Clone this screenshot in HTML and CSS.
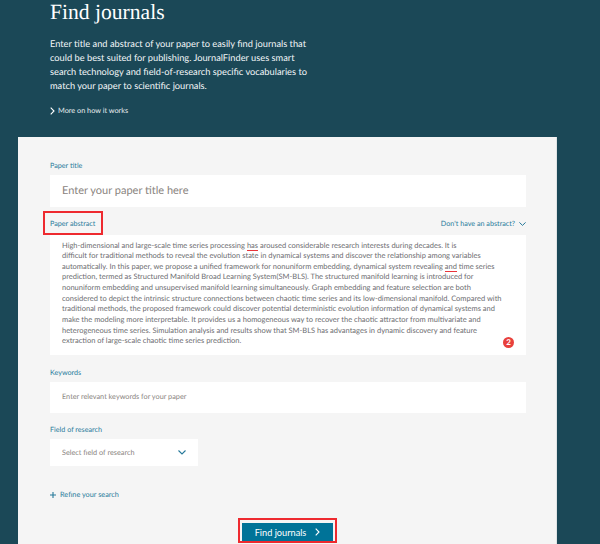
FILE: index.html
```html
<!DOCTYPE html>
<html lang="en">
<head>
<meta charset="utf-8">
<title>Find journals</title>
<link rel="stylesheet" href="styles.css">
</head>
<body>
<main class="page">
  <section class="intro">
    <h1 class="intro-title">Find journals</h1>
    <p class="intro-text">Enter title and abstract of your paper to easily find journals that<br>could be best suited for publishing. JournalFinder uses smart<br>search technology and field-of-research specific vocabularies to<br>match your paper to scientific journals.</p>
    <a class="more-link">
      <svg class="more-icon" width="5" height="8" viewBox="0 0 5 8"><path d="M.7.6 4 4 .7 7.400" fill="none" stroke="#fff" stroke-width="1.100"/></svg>
      More on how it works
    </a>
  </section>
  <form class="card">
    <label class="label label-title">Paper title</label>
    <div class="field field-title">Enter your paper title here</div>

    <div class="abstract-head">
      <label class="label abstract-label">Paper abstract</label>
      <a class="no-abstract">Don't have an abstract?
        <svg width="7" height="4" viewBox="0 0 7 4"><path d="M.4.4 3.500 3.400 6.600.4" fill="none" stroke="#26799a" stroke-width="1"/></svg>
      </a>
    </div>
    <div class="field field-abstract">
      <p class="abstract-text">High-dimensional and large-scale time series processing <span class="spell">has</span> aroused considerable research interests during decades. It is<br>difficult for traditional methods to reveal the evolution state in dynamical systems and discover the relationship among variables<br>automatically. In this paper, we propose a unified framework for nonuniform embedding, dynamical system revealing <span class="spell">and</span> time series<br>prediction, termed as Structured Manifold Broad Learning System(SM-BLS). The structured manifold learning is introduced for<br>nonuniform embedding and unsupervised manifold learning simultaneously. Graph embedding and feature selection are both<br>considered to depict the intrinsic structure connections between chaotic time series and its low-dimensional manifold. Compared with<br>traditional methods, the proposed framework could discover potential deterministic evolution information of dynamical systems and<br>make the modeling more interpretable. It provides us a homogeneous way to recover the chaotic attractor from multivariate and<br>heterogeneous time series. Simulation analysis and results show that SM-BLS has advantages in dynamic discovery and feature<br>extraction of large-scale chaotic time series prediction.</p>
      <span class="badge">2</span>
    </div>

    <label class="label label-keywords">Keywords</label>
    <div class="field field-keywords">Enter relevant keywords for your paper</div>

    <label class="label label-research">Field of research</label>
    <div class="field field-select">
      <span>Select field of research</span>
      <svg width="8" height="5" viewBox="0 0 8 5"><path d="M.5.5 4 4 7.500.5" fill="none" stroke="#26799a" stroke-width="1.100"/></svg>
    </div>

    <a class="refine">
      <svg width="6" height="6" viewBox="0 0 6 6"><path d="M3 0v6M0 3h6" stroke="#26799a" stroke-width="1.100"/></svg>
      Refine your search
    </a>

    <div class="actions">
      <div class="highlight">
        <button class="submit" type="button">Find journals
          <svg width="5" height="8" viewBox="0 0 5 8"><path d="M.7.6 4 4 .7 7.400" fill="none" stroke="#fff" stroke-width="1.100"/></svg>
        </button>
      </div>
    </div>
  </form>
</main>
</body>
</html>
```

FILE: styles.css
```css
* { box-sizing: border-box; }
html, body { margin: 0; height: 544px; overflow: hidden; }
body { background: #1b4857; font-family: Lato, "Open Sans", sans-serif; color: #fff; text-rendering: geometricPrecision; }
.page { display: flex; flex-direction: column; }
.intro { padding: 0 0 0 50px; height: 137px; }
.intro-title { margin: 0; font: 400 21.600px/25px "Liberation Serif", serif; }
.intro-text { margin: 12px 0 0; font-size: 9.280px; line-height: 14px; color: #f2f6f7; }
.more-link { display: flex; align-items: center; gap: 3px; margin-top: 13px; font-size: 7.300px; line-height: 10px; color: #e8eef0; }
.card { position: relative; margin-left: 18px; width: 539px; height: 407px; padding: 24px 30px 0 32px; background: #f5f5f5; border-right: 1px solid #e0e4e5; display: flex; flex-direction: column; }
.label { display: block; font-size: 7.200px; line-height: 10px; color: #2a7c9c; }
.field { background: #fff; color: #8a8480; }
.field-title { margin-top: 4px; height: 32px; padding-left: 12px; font-size: 11px; line-height: 31px; }
.abstract-head { position: relative; z-index: 1; display: flex; justify-content: space-between; margin-top: 12px; height: 16px; align-items: flex-start; }
.abstract-label::after { content: ""; box-sizing: border-box; position: absolute; left: -7px; top: -8px; width: 60px; height: 24px; border: 2px solid #ee2a2f; }
.no-abstract { display: flex; align-items: center; gap: 4px; font-size: 7.200px; line-height: 10px; color: #2a7c9c; }
.field-abstract { position: relative; height: 120px; padding: 5.500px 12px; }
.abstract-text { margin: 0; font-size: 7.500px; line-height: 10.650px; color: #6c6c70; white-space: nowrap; }
.spell { border-bottom: 1px solid #e8343a; }
.badge { position: absolute; right: 12px; bottom: 7px; width: 11px; height: 11px; border-radius: 50%; background: #e8403c; color: #fff; font-size: 8px; font-weight: 700; line-height: 11px; text-align: center; }
.label-keywords { margin-top: 13px; }
.field-keywords { margin-top: 4px; height: 31px; padding-left: 12px; font-size: 7.300px; line-height: 30px; }
.label-research { margin-top: 12px; }
.field-select { margin-top: 4px; width: 148px; height: 27px; padding: 0 12px; font-size: 7.300px; display: flex; align-items: center; justify-content: space-between; }
.refine { display: flex; align-items: center; gap: 4px; margin-top: 24px; font-size: 7.300px; line-height: 10px; color: #2a7c9c; }
.actions { display: flex; justify-content: center; margin-top: 18px; }
.highlight { border: 2px solid #ee2a2f; padding: 3px 2px 0; margin-left: -1px; }
.submit { width: 91px; height: 18px; padding: 0; border: 0; background: #007398; color: #fff; font: 400 9.200px Lato, sans-serif; display: flex; align-items: center; justify-content: center; gap: 9px; }
```
